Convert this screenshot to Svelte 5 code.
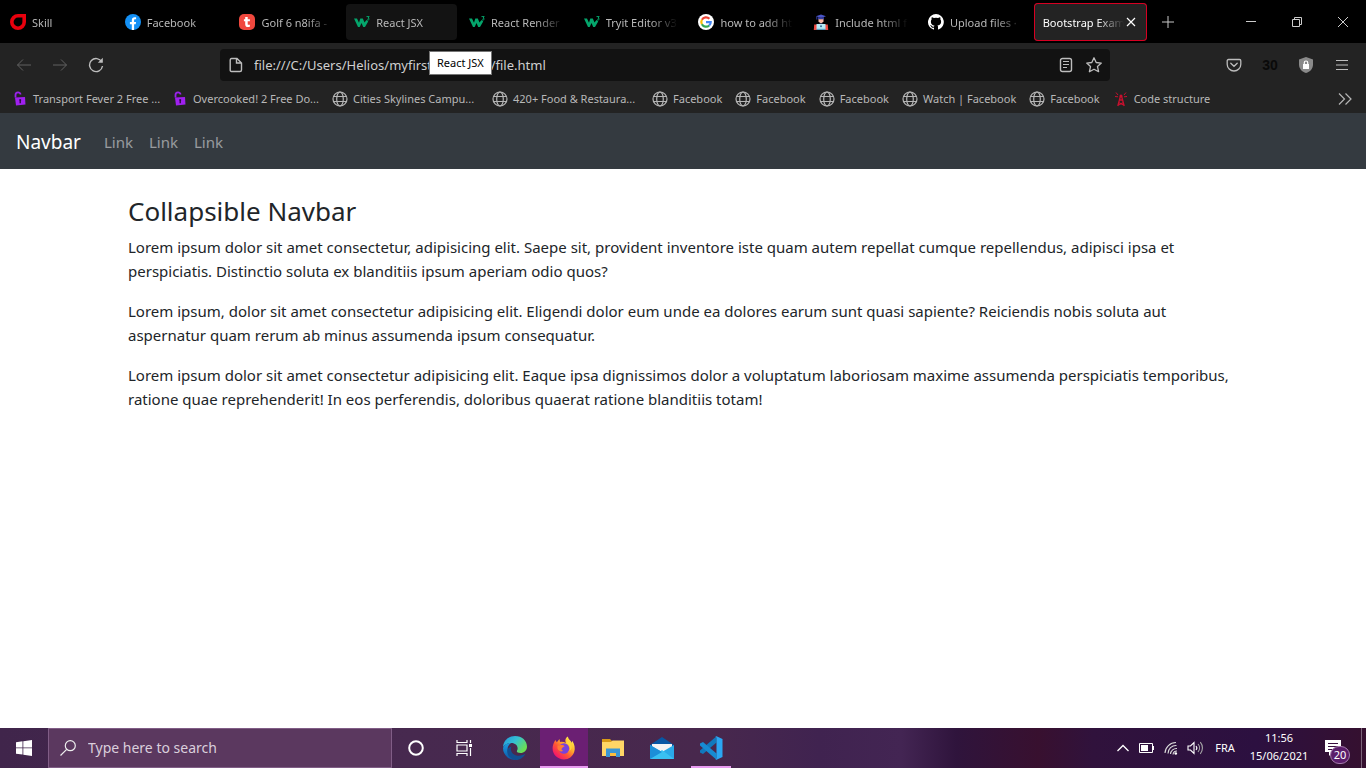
<script>
  const tabs = [
    { title: 'Skill', icon: 'skill' },
    { title: 'Facebook', icon: 'facebook' },
    { title: 'Golf 6 n8ifa -', icon: 'tayara' },
    { title: 'React JSX', icon: 'w3', hovered: true },
    { title: 'React Render', icon: 'w3' },
    { title: 'Tryit Editor v3', icon: 'w3' },
    { title: 'how to add ht', icon: 'google' },
    { title: 'Include html f', icon: 'student' },
    { title: 'Upload files ·', icon: 'github' },
    { title: 'Bootstrap Exam', active: true }
  ];

  const bookmarks = [
    { title: 'Transport Fever 2 Free ...', icon: 'lock', long: true },
    { title: 'Overcooked! 2 Free Do...', icon: 'lock', long: true },
    { title: 'Cities Skylines Campu...', icon: 'globe', long: true },
    { title: '420+ Food & Restaura...', icon: 'globe', long: true },
    { title: 'Facebook', icon: 'globe' },
    { title: 'Facebook', icon: 'globe' },
    { title: 'Facebook', icon: 'globe' },
    { title: 'Watch | Facebook', icon: 'globe' },
    { title: 'Facebook', icon: 'globe' },
    { title: 'Code structure', icon: 'tower' }
  ];

  const apps = [
    { name: 'Edge', icon: 'edge' },
    { name: 'Firefox', icon: 'firefox', current: true },
    { name: 'File Explorer', icon: 'explorer' },
    { name: 'Mail', icon: 'mail' },
    { name: 'Visual Studio Code', icon: 'vscode', running: true }
  ];

  const paragraphs = [
    'Lorem ipsum dolor sit amet consectetur, adipisicing elit. Saepe sit, provident inventore iste quam autem repellat cumque repellendus, adipisci ipsa et perspiciatis. Distinctio soluta ex blanditiis ipsum aperiam odio quos?',
    'Lorem ipsum, dolor sit amet consectetur adipisicing elit. Eligendi dolor eum unde ea dolores earum sunt quasi sapiente? Reiciendis nobis soluta aut aspernatur quam rerum ab minus assumenda ipsum consequatur.',
    'Lorem ipsum dolor sit amet consectetur adipisicing elit. Eaque ipsa dignissimos dolor a voluptatum laboriosam maxime assumenda perspiciatis temporibus, ratione quae reprehenderit! In eos perferendis, doloribus quaerat ratione blanditiis totam!'
  ];

  let url = $state('file:///C:/Users/Helios/myfirstgitproject/file.html');
  let query = $state('');
</script>

{#snippet icon(name)}
  <svg class="icon" viewBox="0 0 16 16" width="16" height="16" fill="none" aria-hidden="true">
    {#if name === 'skill'}
      <path d="M8 1.8h6.2V8A6.2 6.2 0 1 1 8 1.8Z" stroke="#e8000d" stroke-width="3.6" />
    {:else if name === 'facebook'}
      <circle cx="8" cy="8" r="8" fill="#1490f5" />
      <path d="M6.8 15.9V10.3H4.9V8h1.9V6.3c0-2 1.1-3.1 2.9-3.1.8 0 1.4.1 1.4.1v1.9h-.9c-.9 0-1.1.5-1.1 1.1V8h2l-.4 2.3H9.1v5.6Z" fill="#fff" />
    {:else if name === 'tayara'}
      <rect width="16" height="16" rx="5" fill="#f0483e" />
      <path d="M6.2 3h2.5v2.3h2.2v2H8.700v2.600c0 1 .7 1.100 2.200.8v2c-2.600.8-4.700.2-4.700-2.500V7.300H4.900v-2h1.300Z" fill="#fff" />
    {:else if name === 'w3'}
      <path d="M0 4.500h3l2 4.300 1.300-4.300h2.500l1.700 4L12.500 6l1.700 1.500L11 13H9.200L7.500 9l-1.800 4H4Z" fill="#04a56b" />
      <path d="M12.500 2.600h2.700L14 4.200c1.900 0 1.600 2.200-1 1.700" stroke="#04a56b" />
    {:else if name === 'google'}
      <circle cx="8" cy="8" r="8" fill="#fff" />
      <g stroke-width="2.200">
        <path d="M11.400 4.800A4.700 4.700 0 0 0 3.900 5.800" stroke="#ea4335" />
        <path d="M3.900 5.700a4.700 4.700 0 0 0 0 4.600" stroke="#fbbc05" />
        <path d="M3.900 10.200a4.700 4.700 0 0 0 7.300 1.300" stroke="#34a853" />
        <path d="M8 8.200h4.700a4.700 4.700 0 0 1-1.500 3.300" stroke="#4285f4" />
      </g>
    {:else if name === 'student'}
      <path d="M3 2.200 8 .6l5 1.600-5 1.700Z" fill="#4a55c9" />
      <path d="M5 3.200h6v2.300H5ZM3.300 2.500h1v3h-1Z" fill="#343c9c" />
      <path d="M5.500 5.300h5v2.500L8 9.400 5.500 7.800Z" fill="#f7b6a2" />
      <path d="M3.500 13c0-2.500 2-3.500 4.500-3.500s4.500 1 4.500 3.500Z" fill="#2f3c80" />
      <path d="M1.200 10.500h2.800V16H.8ZM12 10.500h2.800l.4 5.500H12Z" fill="#ef4b43" />
      <path d="M3.500 10h9v5h-9Z" fill="#b6ebf7" />
      <circle cx="8" cy="12.300" r="1" fill="#386b93" />
      <path d="M3.500 14.800h9V16h-9Z" fill="#5b9fc1" />
    {:else if name === 'github'}
      <path d="M8 0a8 8 0 0 0-2.500 15.600c.4.100.5-.2.500-.4v-1.500c-2.200.5-2.700-1-2.700-1-.4-.9-.9-1.200-.9-1.200-.7-.5.100-.5.100-.5.800.100 1.200.8 1.200.8.700 1.300 1.900.9 2.300.7.100-.5.300-.9.500-1.100-1.800-.2-3.600-.9-3.600-4 0-.9.300-1.600.8-2.100-.1-.2-.4-1 .1-2.100 0 0 .7-.2 2.200.8a7.600 7.600 0 0 1 4 0c1.500-1 2.200-.8 2.200-.8.400 1.100.2 1.900.1 2.100.5.600.8 1.300.8 2.100 0 3.100-1.900 3.700-3.700 3.900.3.300.6.800.6 1.500v2.300c0 .2.100.5.600.4A8 8 0 0 0 8 0Z" fill="#fff" />
    {:else if name === 'lock'}
      <path d="M3.500 6.500V4c0-3.300 5-3.300 5-.5" stroke="#9b22ec" stroke-width="1.800" />
      <path d="m3 6.500 10-.5 .500 7.500L4 14.500Z" fill="#a020f0" />
      <path d="M8.200 8.300v4M7.300 9h1.800" stroke="#260c36" stroke-width="1.300" />
    {:else if name === 'globe'}
      <g stroke="#b5b5b5" stroke-width="1.200">
        <circle cx="8" cy="8" r="7" />
        <ellipse cx="8" cy="8" rx="3.300" ry="7" />
        <path d="M1.500 5.500h13M1.500 10.500h13" />
      </g>
    {:else if name === 'tower'}
      <g stroke="#c8102e">
        <path d="M3 1.500 5 4M2 5.500l3 .3M13 1.500 11 4M14 5.500l-3 .3" />
        <path d="M7.500 5 4.800 15M8.500 5l2.700 10M6.500 9h3M5.500 11.500l5 2.500M10.500 11.500l-5 2.500" stroke-width="1.300" />
      </g>
      <circle cx="8" cy="5" r="1.500" fill="#c8102e" />
    {/if}
  </svg>
{/snippet}

{#snippet appIcon(name)}
  <svg viewBox="0 0 24 24" width="24" height="24" fill="none" aria-hidden="true">
    {#if name === 'edge'}
      <defs>
        <linearGradient id="edge-top" x1="0" y1="0" x2="1" y2=".6">
          <stop stop-color="#2195dc" /><stop offset=".5" stop-color="#35c1d3" /><stop offset="1" stop-color="#6bdf52" />
        </linearGradient>
        <linearGradient id="edge-low" x1="0" y1="0" x2="0" y2="1">
          <stop stop-color="#1b9de2" /><stop offset="1" stop-color="#0b55a4" />
        </linearGradient>
      </defs>
      <path d="M0 11C.5 4.500 5.500 0 12 0c7 0 12 4.800 12 10.500 0 4-3 6.500-6.500 6.500-2.600 0-4.200-1-3.500-2.300 2-3.700-1-7.700-5.500-7.700C4.500 7 1.500 9 0 11Z" fill="url(#edge-top)" />
      <path d="M0 12C.8 8.500 4 6.800 8 6.900c-3 2-4 5.100-3 8.600C6.300 20 10 23.400 14 23.800A12 12 0 0 1 0 12Z" fill="url(#edge-low)" />
      <path d="M8.500 10.500c-2 4 1 8.900 6.500 9.200 3 .2 5.500-.7 7.600-2.200C20.500 21.500 17 24 13 24 8 23.500 4.200 20 4.200 15.300c0-2.100 1.500-4 4.300-4.800Z" fill="#124f91" />
    {:else if name === 'firefox'}
      <defs>
        <linearGradient id="fox" x1=".9" y1=".1" x2=".2" y2=".9">
          <stop stop-color="#fff44f" /><stop offset=".35" stop-color="#ffb12c" /><stop offset=".65" stop-color="#ff5634" /><stop offset="1" stop-color="#f5156c" />
        </linearGradient>
      </defs>
      <path d="M2 6.500 3.300 4l1.500 2.200L7.500 3l.5 3c2-.5 4 0 6 1C12.500 4 14 1.500 15.800.5c.4 3 2.700 3.600 4 6.200l.5-1.900c2.200 3.300 3.200 7.600 1.900 11.200C20.800 20.500 16.700 23.400 12 23.400 5.700 23.400.6 18.600.6 12.500.6 10 1.300 8 2 6.500Z" fill="url(#fox)" />
      <circle cx="12" cy="12.500" r="5.200" fill="#7841dc" />
      <path d="M5.500 9.500c2 .3 3-1 5-.5 1.500.3 2 .9 2 1.500-1 .3-2 .9-2.700 2-.8 1.300.3 2.200 1.700 2.100-2 1.900-5.200.5-6-2Z" fill="#ff7a35" />
      <path d="M14 7c3.500 1.500 5 4.500 3.500 8 2.500-1.500 3-5 1.300-8L16 4Z" fill="#ffd33c" />
    {:else if name === 'explorer'}
      <path d="M1 3h8l2 2h12v4H1Z" fill="#d99a17" />
      <path d="M1 6h9l1.500-1.500H23V20H1Z" fill="#ffd566" />
      <path d="M5 12.500h14V21h-4v-4H9v4H5Z" fill="#3a96d4" />
      <path d="M9 17h6v3H9Z" fill="#fbbd3e" />
    {:else if name === 'mail'}
      <path d="m0 9 12-8 12 8v3H0Z" fill="#0757a5" />
      <path d="M2 8h20v9H2Z" fill="#f2f3f5" />
      <path d="m0 9 12 7 12-7v14H0Z" fill="#2aa9e8" />
      <path d="M0 23 12 14l12 9Z" fill="#39c0f2" />
      <path d="m0 9 12 7L0 23Z" fill="#1c8fd8" />
    {:else if name === 'vscode'}
      <path d="M17.500.2v6.400L4 18 1 16.400v-1.800Z" fill="#1079bd" />
      <path d="M17.500 23.800v-6.400L4 6 1 7.600v1.800Z" fill="#178bd2" />
      <path d="m17.500.2 6 2.800v18l-6 2.800-1.300-.9c.7.2 1.300-.2 1.300-1V2c0-.9-.8-1.300-1.400-.9Z" fill="#2ba7f3" />
    {/if}
  </svg>
{/snippet}

<div class="screen">
  <header class="browser">
    <div class="titlebar">
      <div class="tabs" role="tablist" aria-label="Browser tabs">
        {#each tabs as tab}
          <div class="tab" class:hovered={tab.hovered} class:active={tab.active}>
            <button class="tab-main" role="tab" aria-selected={!!tab.active}>
              {#if tab.icon}{@render icon(tab.icon)}{/if}
              <span class="tab-label">{tab.title}</span>
            </button>
            {#if tab.active}
              <button class="tab-close" aria-label="Close tab">
                <svg viewBox="0 0 10 10" width="10" height="10" stroke="#fff" stroke-width="1.200"><path d="m1 1 8 8M9 1 1 9" /></svg>
              </button>
            {/if}
          </div>
        {/each}
      </div>
      <button class="new-tab" aria-label="New tab">
        <svg viewBox="0 0 12 12" width="12" height="12" stroke="#c8c8c8"><path d="M6 0v12M0 6h12" /></svg>
      </button>
      <div class="window-buttons">
        <button aria-label="Minimize"><svg viewBox="0 0 10 10" width="10" height="10" stroke="#ccc"><path d="M0 4.500h10" /></svg></button>
        <button aria-label="Restore"><svg viewBox="0 0 10 10" width="10" height="10" fill="none" stroke="#ccc"><path d="M.5 2.500h7v7h-7ZM2.500 2.500v-2h7v7h-2" /></svg></button>
        <button aria-label="Close"><svg viewBox="0 0 10 10" width="10" height="10" stroke="#ccc"><path d="m0 0 10 10M10 0 0 10" /></svg></button>
      </div>
    </div>

    <div class="toolbar">
      <button class="tool dim" aria-label="Back"><svg viewBox="0 0 16 16" width="16" height="16"><path d="M15 8H1.500M7 2.500 1.500 8 7 13.500" /></svg></button>
      <button class="tool dim" aria-label="Forward"><svg viewBox="0 0 16 16" width="16" height="16"><path d="M1 8h13.500M9 2.500 14.500 8 9 13.500" /></svg></button>
      <button class="tool" aria-label="Reload"><svg viewBox="0 0 16 16" width="16" height="16"><path d="M13.800 5A6.500 6.500 0 1 0 14.500 9" stroke-width="1.400" /><path d="M14.800.8v5h-5Z" fill="#bdbdbd" stroke="none" /></svg></button>
      <div class="urlbar">
        <svg viewBox="0 0 16 16" width="16" height="16"><path d="M3.500 1.500H9L13.500 6v7a1.500 1.500 0 0 1-1.500 1.500H3.500A1.300 1.300 0 0 1 2.200 13V3a1.500 1.500 0 0 1 1.300-1.500ZM8.500 1.500V6h5" stroke-width="1.400" /></svg>
        <input class="url" type="text" aria-label="Address" spellcheck="false" bind:value={url} />
        <button class="url-tool" aria-label="Reader view"><svg viewBox="0 0 16 16" width="16" height="16"><rect x="2.500" y="1.500" width="11" height="13" rx="2" stroke-width="1.400" /><path d="M5 4.500h6M5 7.500h6M5 10.500h4" /></svg></button>
        <button class="url-tool" aria-label="Bookmark this page"><svg viewBox="0 0 16 16" width="16" height="16"><path d="m8 .8 2.200 4.700 5.100.6-3.800 3.500 1.100 5.100L8 12.200l-4.600 2.500 1.100-5.100L.7 6.100l5.100-.6Z" stroke-width="1.300" stroke-linejoin="round" /></svg></button>
      </div>
      <button class="tool" aria-label="Save to Pocket"><svg viewBox="0 0 16 16" width="16" height="16"><path d="M2.500 2.500h11c.8 0 1.300.5 1.300 1.300v3.400a6.800 6.800 0 0 1-13.600 0V3.800c0-.8.5-1.300 1.300-1.300ZM4.800 6.300 8 9.300l3.200-3" stroke-width="1.300" stroke-linecap="round" /></svg></button>
      <button class="tool counter" aria-label="30 tabs saved">30</button>
      <button class="tool" aria-label="Privacy shield"><svg viewBox="0 0 16 16" width="16" height="16"><path d="M8 0 15 2.500v5C15 12 12 14.800 8 16 4 14.800 1 12 1 7.500v-5Z" fill="#8a8a8a" stroke="none" /><path d="M5 7h6v5H5Z" fill="#fff" stroke="none" /><path d="M6.300 7V5.500c0-2 3.400-2 3.400 0V7" stroke="#fff" stroke-width="1.200" /></svg></button>
      <button class="tool" aria-label="Menu"><svg viewBox="0 0 16 16" width="16" height="16"><path d="M2 3.500h12M2 8h12M2 12.500h12" stroke-width="1.200" /></svg></button>
      <div class="tooltip" role="tooltip">React JSX</div>
    </div>

    <nav class="bookmarks" aria-label="Bookmarks">
      {#each bookmarks as mark}
        <a class:long={mark.long} href="#top">{@render icon(mark.icon)}<span>{mark.title}</span></a>
      {/each}
      <button class="more" aria-label="More bookmarks"><svg viewBox="0 0 14 12" width="14" height="12" fill="none" stroke="#b5b5b5" stroke-width="1.200"><path d="m1 .5 5.500 5.500L1 11.500M7.500.5 13 6l-5.500 5.500" /></svg></button>
    </nav>
  </header>

  <main class="page">
    <nav class="navbar" aria-label="Site">
      <a class="brand" href="#top">Navbar</a>
      <a class="link" href="#top">Link</a>
      <a class="link" href="#top">Link</a>
      <a class="link" href="#top">Link</a>
    </nav>
    <div class="container">
      <h3>Collapsible Navbar</h3>
      {#each paragraphs as text}
        <p>{text}</p>
      {/each}
    </div>
  </main>

  <footer class="taskbar">
    <button class="task" aria-label="Start"><svg viewBox="0 0 16 16" width="16" height="16" fill="#fff"><path d="M0 2.200 6.500 1.300v6.200H0ZM7.300 1.200 16 0v7.500H7.300ZM0 8.300h6.500v6.300L0 13.700ZM7.300 8.300H16V16l-8.700-1.300Z" /></svg></button>
    <label class="search">
      <svg viewBox="0 0 16 16" width="16" height="16" fill="none" stroke="#eee" stroke-width="1.200"><circle cx="10.300" cy="5.700" r="5" /><path d="M6.700 9.300.5 15.500" /></svg>
      <input type="text" aria-label="Search" placeholder="Type here to search" bind:value={query} />
    </label>
    <button class="task" aria-label="Cortana"><svg viewBox="0 0 16 16" width="16" height="16" fill="none" stroke="#fff" stroke-width="2"><circle cx="8" cy="8" r="6.800" /></svg></button>
    <button class="task" aria-label="Task view"><svg viewBox="0 0 17 16" width="17" height="16" fill="none" stroke="#fff" stroke-width="1.200"><path d="M1 0v2.500h10V0M1 5h10v6H1ZM1 16v-2.500h10V16M14.500 0v3M14.500 8v8" /><path d="M13 4h3v3h-3Z" fill="#fff" stroke="none" /></svg></button>
    <div class="apps">
      {#each apps as app}
        <button class="task" class:current={app.current} class:running={app.running} aria-label={app.name}>
          {@render appIcon(app.icon)}
        </button>
      {/each}
    </div>
    <div class="tray">
      <button class="tray-button" aria-label="Show hidden icons"><svg viewBox="0 0 12 8" width="12" height="8" fill="none" stroke="#fff" stroke-width="1.300"><path d="m.5 7 5.500-5.500L11.500 7" /></svg></button>
      <button class="tray-button" aria-label="Battery"><svg viewBox="0 0 16 10" width="16" height="10" fill="none" stroke="#fff"><path d="M.5.5h13v9H.5ZM14.500 3v4" /><path d="M2 2h7v6H2Z" fill="#fff" stroke="none" /></svg></button>
      <button class="tray-button" aria-label="Network"><svg viewBox="0 0 14 14" width="14" height="14" fill="none" stroke="#ddd" stroke-width="1.100"><path d="M1 12A11 11 0 0 1 12 1.500M4 12.500A8 8 0 0 1 12.500 4.500M6.500 13A6 6 0 0 1 13 7.500M9 13.500a4 4 0 0 1 4-3.500" /><circle cx="11.800" cy="12.500" r="1.300" fill="#fff" stroke="none" /></svg></button>
      <button class="tray-button" aria-label="Volume"><svg viewBox="0 0 17 14" width="17" height="14" fill="none" stroke="#fff" stroke-width="1.100"><path d="M1 5h2.500L7 1.500v11L3.500 9H1ZM9 5a3 3 0 0 1 0 4" /><path d="M11 3a6 6 0 0 1 0 8M13.300 1.200a9 9 0 0 1 0 11.600" stroke="#aaa" /></svg></button>
      <button class="language">FRA</button>
      <button class="clock"><span>11:56</span><span>15/06/2021</span></button>
      <button class="notice" aria-label="20 notifications">
        <svg viewBox="0 0 16 16" width="16" height="16"><path d="M0 0h16v12H8l-4 4v-4H0Z" fill="#fff" /><path d="M3 3.500h10M3 6.500h10M3 9.500h6" stroke="#3a1040" /></svg>
        <span class="badge">20</span>
      </button>
      <button class="show-desktop" aria-label="Show desktop"></button>
    </div>
  </footer>
</div>

<style>
  :global(body) {
    margin: 0;
  }

  .screen,
  .screen * {
    box-sizing: border-box;
  }

  .screen {
    display: flex;
    flex-direction: column;
    min-height: 100vh;
    font-family: "Noto Sans", "Open Sans", sans-serif;
    background: #fff;
  }

  button,
  input {
    margin: 0;
    padding: 0;
    border: 0;
    background: none;
    color: inherit;
    font: inherit;
  }

  button {
    display: flex;
    align-items: center;
    justify-content: center;
  }

  a {
    text-decoration: none;
  }

  svg {
    flex: none;
  }

  .browser {
    background: #232323;
    color: #b8b8b8;
    font-size: 11px;
    line-height: 16px;
  }

  .titlebar {
    display: flex;
    height: 43px;
    background: #000;
  }

  .tabs {
    flex: 0 0 84%;
    display: grid;
    grid-template-columns: repeat(10, minmax(0, 1fr));
    padding: 3px 0 2px;
  }

  .tab {
    display: flex;
    align-items: center;
    margin: 0 2px;
    padding: 0 8px;
    border-radius: 4px;
  }

  .tab.hovered {
    background: #131313;
    margin-block: 1px;
  }

  .tab.active {
    margin: 0 0 0 1px;
    padding: 0 9px;
    background: #232323;
    color: #fff;
    box-shadow: inset 0 0 0 1px #d70022;
  }

  .tab-main {
    flex: 1;
    min-width: 0;
    gap: 6px;
    justify-content: flex-start;
  }

  .tab-label {
    flex: 1;
    overflow: hidden;
    padding-top: 1px;
    text-align: left;
    white-space: nowrap;
    mask-image: linear-gradient(to left, transparent, #000 28px);
  }

  .tab-close {
    width: 14px;
    height: 18px;
  }

  .new-tab {
    width: 42px;
  }

  .window-buttons {
    display: flex;
    margin-left: auto;
  }

  .window-buttons button {
    width: 46px;
  }

  .toolbar {
    position: relative;
    display: flex;
    align-items: center;
    height: 43px;
    padding: 0 6px;
  }

  .toolbar svg {
    fill: none;
    stroke: #bdbdbd;
  }

  .tool {
    width: 36px;
    height: 32px;
  }

  .dim {
    opacity: 0.4;
  }

  .counter {
    color: #0a0a0a;
    font: bold 14px "Liberation Sans", sans-serif;
  }

  .urlbar {
    flex: 1;
    display: flex;
    align-items: center;
    height: 32px;
    margin: 0 106px;
    padding: 0 2px 0 8px;
    border-radius: 4px;
    background: #121212;
  }

  .url {
    flex: 1;
    min-width: 0;
    margin-left: 10px;
    color: #cfcfcf;
    font-size: 13px;
    line-height: 20px;
    outline: none;
  }

  .url-tool {
    width: 28px;
    height: 28px;
  }

  .tooltip {
    position: absolute;
    left: 429px;
    top: 8px;
    padding: 2px 7px;
    border: 1px solid #767676;
    background: #fff;
    color: #000;
    line-height: 18px;
    white-space: nowrap;
  }

  .bookmarks {
    display: flex;
    align-items: center;
    gap: 13px;
    height: 27px;
    padding: 0 14px 2px 12px;
  }

  .bookmarks a {
    display: flex;
    align-items: center;
    gap: 5px;
    color: inherit;
    white-space: nowrap;
  }

  .bookmarks .long {
    width: 147px;
  }

  .more {
    margin-left: auto;
  }

  .page {
    flex: 1;
    color: #212529;
    font-size: 15px;
    line-height: 24px;
  }

  .navbar {
    display: flex;
    align-items: center;
    min-height: 56px;
    padding: 8px 16px;
    background: #343a40;
  }

  .brand {
    margin-right: 15px;
    padding-top: 2px;
    color: #fff;
    font-size: 19px;
    line-height: 30px;
  }

  .link {
    padding: 9px 8px 7px;
    color: rgba(255, 255, 255, 0.5);
  }

  .container {
    max-width: 1140px;
    margin: 24px auto 0;
    padding: 0 15px;
  }

  h3 {
    margin: 0 0 6px;
    font-size: 26px;
    font-weight: 400;
    line-height: 36px;
  }

  p {
    margin: 0 0 16px;
  }

  .taskbar {
    display: flex;
    height: 40px;
    color: #fff;
    background: linear-gradient(90deg, #40254b 0%, #47294f 30%, #48284d 52%, #402350 60%, #432553 66%, #2f143c 70%, #38102f 76%, #30123c 80%, #2c1040 92%, #35102f 100%);
  }

  .task {
    flex: none;
    width: 48px;
  }

  .search {
    flex: 0 1 344px;
    display: flex;
    align-items: center;
    gap: 12px;
    padding: 0 11px;
    border: 1px solid #805d86;
    background: #5b385f;
  }

  .search input {
    flex: 1;
    min-width: 0;
    font-size: 14px;
    line-height: 20px;
    outline: none;
  }

  .search input::placeholder {
    color: #dacfdc;
    opacity: 1;
  }

  .apps {
    display: flex;
    gap: 1px;
    margin-left: 3px;
  }

  .current {
    background: #6b1f73;
    box-shadow: inset 0 -2px #e89bf0;
  }

  .running {
    background: linear-gradient(#e89bf0, #e89bf0) center bottom / 40px 2px no-repeat;
  }

  .tray {
    display: flex;
    margin-left: auto;
    font-size: 11px;
    line-height: 18px;
  }

  .tray-button {
    width: 24px;
  }

  .language {
    width: 36px;
  }

  .clock {
    width: 72px;
    padding-bottom: 2px;
    flex-direction: column;
  }

  .notice {
    position: relative;
    width: 46px;
    padding-right: 10px;
  }

  .badge {
    position: absolute;
    left: 15px;
    top: 18px;
    width: 20px;
    border: 1px solid #a57bad;
    border-radius: 9px;
    background: #5b1d6b;
    line-height: 16px;
    text-align: center;
  }

  .show-desktop {
    width: 5px;
    border-left: 1px solid #7b6479;
  }
</style>
